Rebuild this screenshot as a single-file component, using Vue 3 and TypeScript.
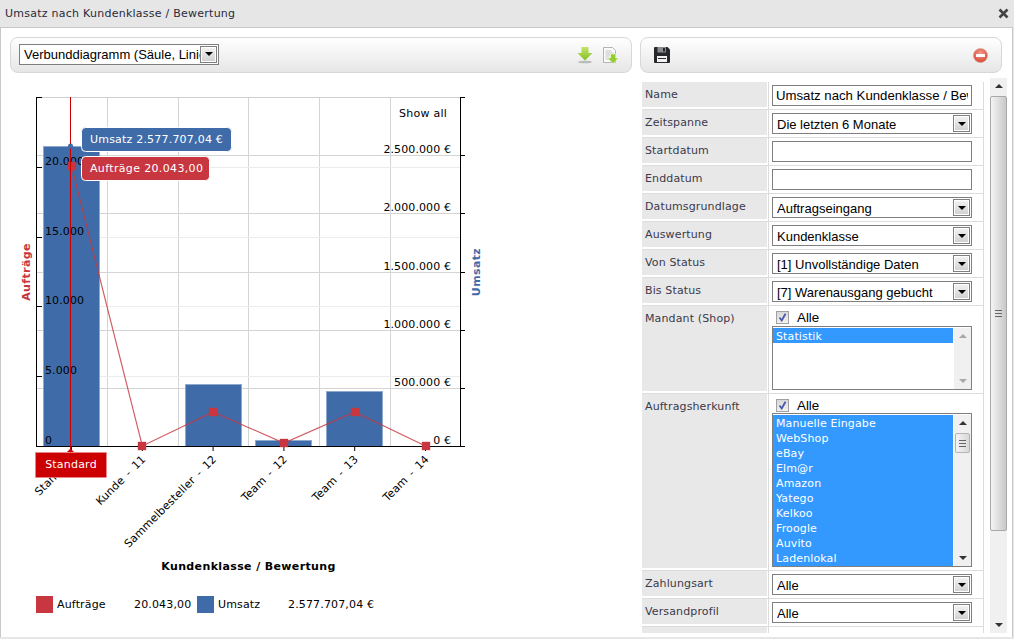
<script setup lang="ts">
import { computed } from "vue";

interface Point { label: string; orders: number; revenue: number }

const points: Point[] = [
    { label: 'Standard', orders: 20043, revenue: 2577707 },
    { label: 'Kunde - 11', orders: 0, revenue: 0 },
    { label: 'Sammelbesteller - 12', orders: 2435, revenue: 533000 },
    { label: 'Team - 12', orders: 215, revenue: 51600 },
    { label: 'Team - 13', orders: 2435, revenue: 473000 },
    { label: 'Team - 14', orders: 0, revenue: 0 },
];

const baseY = 446;
const topY = 97;
const plotH = baseY - topY;
const stepX = 70.8;

const xAt = (i: number) => 71.5 + i * stepX;
const yOrders = (v: number) => baseY - (v / 25000) * plotH;
const yRevenue = (v: number) => baseY - (v / 3000000) * plotH;
const crisp = (y: number) => Math.round(y) + 0.5;

const leftTicks = [0, 5000, 10000, 15000, 20000].map((v) => ({
    y: crisp(yOrders(v)),
    text: v === 0 ? '0' : v.toLocaleString('de-DE'),
}));
const rightTicks = [0, 500000, 1000000, 1500000, 2000000, 2500000].map((v) => ({
    y: crisp(yRevenue(v)),
    text: v.toLocaleString('de-DE') + ' €',
}));
const gridX = [107.5, 178.5, 248.5, 319.5, 390.5];

const linePath = computed(() =>
    points.map((p, i) => `${xAt(i)},${yOrders(p.orders)}`).join(' ')
);

const origins = ['Manuelle Eingabe', 'WebShop', 'eBay', 'Elm@r', 'Amazon', 'Yatego', 'Kelkoo', 'Froogle', 'Auvito', 'Ladenlokal'];

const simpleRows: { label: string; type: string; value: string }[] = [
    { label: 'Name', type: 'text', value: 'Umsatz nach Kundenklasse / Bewertung' },
    { label: 'Zeitspanne', type: 'select', value: 'Die letzten 6 Monate' },
    { label: 'Startdatum', type: 'text', value: '' },
    { label: 'Enddatum', type: 'text', value: '' },
    { label: 'Datumsgrundlage', type: 'select', value: 'Auftragseingang' },
    { label: 'Auswertung', type: 'select', value: 'Kundenklasse' },
    { label: 'Von Status', type: 'select', value: '[1] Unvollständige Daten' },
    { label: 'Bis Status', type: 'select', value: '[7] Warenausgang gebucht' },
];
</script>

<template>
    <div class="window">
        <header class="title">
            <span>Umsatz nach Kundenklasse / Bewertung</span>
            <svg class="close" width="11" height="11" viewBox="0 0 11 11">
                <path d="M1.500 1.500l8 8M9.500 1.500l-8 8" stroke="#444" stroke-width="2.600" />
            </svg>
        </header>

        <div class="body">
            <section class="left">
                <div class="toolbar">
                    <div class="combo combo--chart">
                        <select>
                            <option>Verbunddiagramm (Säule, Linie)</option>
                        </select>
                        <span class="combo--btn"><i></i></span>
                    </div>
                    <div class="toolbar--icons">
                        <svg width="16" height="18" viewBox="0 0 16 18">
                            <defs>
                                <linearGradient id="g1" x1="0" y1="0" x2="0" y2="1">
                                    <stop offset="0" stop-color="#c4e46c" />
                                    <stop offset="1" stop-color="#84c020" />
                                </linearGradient>
                            </defs>
                            <ellipse cx="8" cy="16" rx="7" ry="1.300" fill="#9a9a9a" opacity="0.6" />
                            <path d="M4.500 1h7v6H15.500l-7.500 7.500L0.500 7H4.500z" fill="url(#g1)" />
                        </svg>
                        <svg width="17" height="17" viewBox="0 0 17 17">
                            <path d="M1.500 .5h9l3 3v12h-12z" fill="#fafafa" stroke="#b4b4b4" />
                            <path d="M3.500 4h6M3.500 6h8M3.500 8h5M3.500 10h4M3.500 12h4" stroke="#c4c4c4" />
                            <path d="M8.500 7h5v4H16.500l-5.500 5.500L5.500 11h3z" fill="#94cc2c" stroke="#fff" stroke-width=".5" />
                        </svg>
                    </div>
                </div>

                <svg class="chart" width="490" height="505" viewBox="0 80 490 505">
                    <line v-for="x in gridX" :key="x" :x1="x" :x2="x" :y1="topY" :y2="baseY" stroke="#d4d4d4" />
                    <line x1="36" x2="460" :y1="topY + .5" :y2="topY + .5" stroke="#cfcfcf" />
                    <line v-for="t in leftTicks.slice(1)" :key="t.y" x1="36" x2="460" :y1="t.y" :y2="t.y" stroke="#ececec" />
                    <line v-for="t in rightTicks.slice(1)" :key="t.y" x1="36" x2="460" :y1="t.y" :y2="t.y" stroke="#d4d4d4" />

                    <template v-for="(p, i) in points" :key="p.label">
                        <rect
                            v-if="p.revenue > 0"
                            :x="Math.round(xAt(i) - 28.5) + .5"
                            :y="Math.round(yRevenue(p.revenue)) + .5"
                            width="56"
                            :height="baseY - Math.round(yRevenue(p.revenue))"
                            fill="#3f6ca8"
                            stroke="#8fa9cc"
                            stroke-width="1"
                        />
                    </template>

                    <text v-for="t in leftTicks" :key="t.text" x="45" :y="t.y - 3" class="tick">{{ t.text }}</text>
                    <text v-for="t in rightTicks" :key="t.text" x="451" :y="t.y - 3" text-anchor="end" class="tick">{{ t.text }}</text>
                    <text x="447" y="117" text-anchor="end" class="tick tick--wide">Show all</text>

                    <line x1="36.500" x2="36.500" :y1="topY" :y2="baseY + .5" stroke="#000" />
                    <line x1="460.500" x2="460.500" :y1="topY" :y2="baseY + .5" stroke="#000" />
                    <line x1="36" x2="465" :y1="baseY + .5" :y2="baseY + .5" stroke="#000" />
                    <line x1="36" x2="42" :y1="topY + .5" :y2="topY + .5" stroke="#000" />
                    <line x1="460" x2="465" :y1="topY + .5" :y2="topY + .5" stroke="#000" />
                    <line v-for="t in leftTicks.slice(1)" :key="t.y" x1="36" x2="42" :y1="t.y" :y2="t.y" stroke="#000" />
                    <line v-for="t in rightTicks.slice(1)" :key="t.y" x1="460" x2="465" :y1="t.y" :y2="t.y" stroke="#000" />
                    <line v-for="(p, i) in points" :key="p.label" :x1="xAt(i)" :x2="xAt(i)" :y1="baseY" :y2="baseY + 5" stroke="#000" />

                    <polyline :points="linePath" fill="none" stroke="#c8363f" stroke-width="1.200" opacity=".8" />
                    <rect
                        v-for="(p, i) in points"
                        :key="p.label"
                        :x="Math.round(xAt(i)) - 4"
                        :y="Math.round(yOrders(p.orders)) - 4"
                        width="8"
                        height="8"
                        fill="#c8363f"
                        stroke="#c8363f"
                        stroke-opacity=".35"
                        stroke-width="1"
                    />

                    <text
                        v-for="(p, i) in points"
                        :key="p.label"
                        :transform="`rotate(-45 ${xAt(i) + 4} 460)`"
                        :x="xAt(i) + 4"
                        y="460"
                        text-anchor="end"
                        class="tick tick--cat"
                    >{{ p.label }}</text>

                    <text x="248.500" y="570" text-anchor="middle" class="axis">Kundenklasse / Bewertung</text>
                    <text transform="rotate(-90 30 272)" x="30" y="272" text-anchor="middle" class="axis axis--red">Aufträge</text>
                    <text transform="rotate(-90 480 272)" x="480" y="272" text-anchor="middle" class="axis axis--blue">Umsatz</text>

                    <line x1="70.500" x2="70.500" :y1="topY" y2="453" stroke="#cc0000" />
                    <circle cx="70.500" cy="146" r="2.500" fill="#3f6ca8" />

                    <rect x="81.500" y="127.500" width="150" height="24" rx="4" fill="#3f6ca8" stroke="#fff" />
                    <text x="90" y="143" class="tip">Umsatz 2.577.707,04 €</text>
                    <rect x="81.500" y="156.500" width="128" height="24" rx="4" fill="#c8363f" stroke="#fff" />
                    <text x="90" y="172" class="tip tip--wide">Aufträge 20.043,00</text>

                    <path d="M67 452l3.500-3.500 3.500 3.500z" fill="#cc0000" />
                    <rect x="35.500" y="452.500" width="71" height="25" fill="#cc0000" stroke="#e88" stroke-width=".6" />
                    <text x="71" y="468" text-anchor="middle" class="tip">Standard</text>
                </svg>

                <div class="legend">
                    <i class="legend--swatch legend--red"></i>
                    <span class="legend--name">Aufträge</span>
                    <span class="legend--value">20.043,00</span>
                    <i class="legend--swatch legend--blue"></i>
                    <span class="legend--name legend--name--short">Umsatz</span>
                    <span>2.577.707,04 €</span>
                </div>
            </section>

            <section class="right">
                <div class="toolbar toolbar--right">
                    <svg width="16" height="16" viewBox="0 0 16 16">
                        <path d="M0 1a1 1 0 0 1 1-1h12.500L16 2.500V15a1 1 0 0 1-1 1H1a1 1 0 0 1-1-1z" fill="#26282b" />
                        <rect x="3.500" y="0" width="8.500" height="5.500" fill="#8a8d90" />
                        <rect x="9" y="1" width="2" height="3.500" fill="#26282b" />
                        <rect x="3" y="9" width="10" height="6" fill="#f2f2f2" />
                        <rect x="4" y="11" width="8" height="1" fill="#26282b" />
                    </svg>
                    <svg width="15" height="15" viewBox="0 0 15 15">
                        <defs>
                            <radialGradient id="r1" cx=".5" cy=".35" r=".7">
                                <stop offset="0" stop-color="#f59a8c" />
                                <stop offset="1" stop-color="#d9412f" />
                            </radialGradient>
                        </defs>
                        <circle cx="7.500" cy="7.500" r="7" fill="url(#r1)" stroke="#c9a090" stroke-width=".6" />
                        <rect x="3" y="6" width="9" height="3" rx=".5" fill="#fff" />
                    </svg>
                </div>

                <div class="formWrap">
                    <div class="form">
                        <div v-for="row in simpleRows" :key="row.label" class="row">
                            <div class="row--label">{{ row.label }}</div>
                            <div class="row--field">
                                <input v-if="row.type === 'text'" class="input" type="text" :value="row.value">
                                <div v-else class="combo">
                                    <select><option>{{ row.value }}</option></select>
                                    <span class="combo--btn"><i></i></span>
                                </div>
                            </div>
                        </div>

                        <div class="row">
                            <div class="row--label">Mandant (Shop)</div>
                            <div class="row--field">
                                <label class="check"><span class="check--box">
                                    <svg width="9" height="9" viewBox="0 0 9 9"><path d="M1.500 4.500l2.200 3L7.500.8" fill="none" stroke="#4a58a8" stroke-width="1.800" /></svg>
                                </span>Alle</label>
                                <div class="list list--small">
                                    <div class="list--items">
                                        <div class="list--opt">Statistik</div>
                                    </div>
                                    <div class="list--bar">
                                        <i class="arrow arrow--up arrow--off"></i>
                                        <i class="arrow arrow--down arrow--off"></i>
                                    </div>
                                </div>
                            </div>
                        </div>

                        <div class="row">
                            <div class="row--label">Auftragsherkunft</div>
                            <div class="row--field">
                                <label class="check"><span class="check--box">
                                    <svg width="9" height="9" viewBox="0 0 9 9"><path d="M1.500 4.500l2.200 3L7.500.8" fill="none" stroke="#4a58a8" stroke-width="1.800" /></svg>
                                </span>Alle</label>
                                <div class="list list--big">
                                    <div class="list--items list--items--fill">
                                        <div v-for="o in origins" :key="o" class="list--opt">{{ o }}</div>
                                    </div>
                                    <div class="list--bar">
                                        <i class="arrow arrow--up"></i>
                                        <span class="list--thumb"><b></b></span>
                                        <i class="arrow arrow--down"></i>
                                    </div>
                                </div>
                            </div>
                        </div>

                        <div class="row">
                            <div class="row--label">Zahlungsart</div>
                            <div class="row--field">
                                <div class="combo"><select><option>Alle</option></select><span class="combo--btn"><i></i></span></div>
                            </div>
                        </div>
                        <div class="row">
                            <div class="row--label">Versandprofil</div>
                            <div class="row--field">
                                <div class="combo"><select><option>Alle</option></select><span class="combo--btn"><i></i></span></div>
                            </div>
                        </div>
                        <div class="row">
                            <div class="row--label"></div>
                            <div class="row--field"></div>
                        </div>
                    </div>

                    <div class="pageBar">
                        <i class="arrow arrow--up"></i>
                        <span class="pageBar--thumb"><b></b></span>
                        <i class="arrow arrow--down"></i>
                    </div>
                </div>
            </section>
        </div>
    </div>
</template>

<style scoped>
.window {
    width: 1014px;
    height: 639px;
    background: #e6e6e6;
    font-family: "DejaVu Sans", Verdana, sans-serif;
    font-size: 11px;
    color: #000;
    overflow: hidden;
    box-sizing: border-box;
}

.title {
    height: 27px;
    display: flex;
    align-items: center;
    justify-content: space-between;
    padding: 0 5px;
    color: #2a2a3a;
    letter-spacing: .25px;
    box-sizing: border-box;
}

.body {
    width: 1013px;
    height: 610px;
    display: flex;
    background: #fff;
    border: 1px solid #c8c8c8;
    border-bottom: none;
    box-sizing: border-box;
    overflow: hidden;
}

.left {
    width: 639px;
    flex: none;
    padding: 9px 0 0 9px;
    box-sizing: border-box;
}

.right {
    flex: 1;
    padding: 9px 0 0 0;
    min-width: 0;
}

.toolbar {
    height: 36px;
    width: 622px;
    display: flex;
    align-items: center;
    justify-content: space-between;
    border: 1px solid #d8d8d8;
    border-radius: 8px;
    background: linear-gradient(#ffffff, #e6e6e6);
    padding: 0 11px 0 8px;
    box-sizing: border-box;
}

.toolbar--right {
    width: 362px;
    padding: 0 13px 0 13px;
}

.toolbar--icons {
    display: flex;
    gap: 9px;
    align-items: center;
    margin-right: 1px;
}

.chart {
    display: block;
    margin: 7px 0 0 -10px;
}

.tick {
    font-size: 11px;
    letter-spacing: .1px;
    fill: #000;
}

.tick--wide {
    letter-spacing: .25px;
}

.tick--cat {
    letter-spacing: .15px;
    word-spacing: 2px;
}

.axis {
    font-size: 11px;
    font-weight: bold;
    letter-spacing: .37px;
    fill: #000;
}

.axis--red {
    fill: #c8363f;
}

.axis--blue {
    fill: #3f6ca8;
}

.tip {
    font-size: 11px;
    letter-spacing: .2px;
    fill: #fff;
}

.tip--wide {
    letter-spacing: .35px;
}

.legend {
    display: flex;
    align-items: center;
    margin: 11px 0 0 26px;
    height: 17px;
    letter-spacing: .15px;
}

.legend--swatch {
    width: 17px;
    height: 17px;
    display: block;
    flex: none;
}

.legend--red {
    background: #c8363f;
}

.legend--blue {
    background: #3f6ca8;
}

.legend--name {
    margin-left: 4px;
    width: 77px;
}

.legend--name--short {
    width: 70px;
}

.legend--value {
    width: 63px;
}

.formWrap {
    display: flex;
    height: 555px;
    margin-top: 5px;
    overflow: hidden;
}

.form {
    width: 342px;
    margin: 4px 0 0 2px;
    flex: none;
    letter-spacing: .13px;
}

.row {
    display: grid;
    grid-template-columns: 125px 1fr;
    column-gap: 1px;
    border-bottom: 1px solid #dcdcdc;
    min-height: 27px;
}

.row--label {
    background: #e8e8e8;
    margin-bottom: 2px;
    padding: 6px 0 0 3px;
    color: #3a3a4a;
    line-height: 14px;
}

.row--field {
    border-left: 1px solid #dcdcdc;
    border-right: 1px solid #dcdcdc;
    padding: 3px 10px 3px 3px;
}

.input {
    display: block;
    width: 200px;
    height: 21px;
    border: 1px solid #7f7f7f;
    padding: 1px 3px;
    box-sizing: border-box;
    font-family: "Liberation Sans", Arial, sans-serif;
    font-size: 13.2px;
    color: #000;
    background: #fff;
    outline: none;
}

.combo {
    position: relative;
    width: 200px;
    height: 21px;
}

.combo--chart {
    margin-top: -2px;
}

.combo select {
    display: block;
    width: 100%;
    height: 100%;
    border: 1px solid #7f7f7f;
    border-radius: 0;
    appearance: none;
    background: #fff;
    padding: 1px 3px 0 4px;
    box-sizing: border-box;
    font-family: "Liberation Sans", Arial, sans-serif;
    font-size: 13px;
    color: #000;
}

.combo--btn {
    position: absolute;
    top: 2px;
    right: 2px;
    width: 17px;
    height: 17px;
    box-sizing: border-box;
    border: 1px solid #7f7f7f;
    background: linear-gradient(#f4f4f4, #cfcfcf);
    box-shadow: inset 0 0 0 1px #fff;
    display: flex;
    align-items: center;
    justify-content: center;
}

.combo--btn i {
    width: 0;
    height: 0;
    border: 4px solid transparent;
    border-top: 4px solid #000;
    border-bottom: none;
}

.check {
    display: flex;
    align-items: center;
    height: 15px;
    margin: 1px 0 0 4px;
    font-family: "Liberation Sans", Arial, sans-serif;
    font-size: 13.33px;
    letter-spacing: 0;
}

.check--box {
    width: 11px;
    height: 11px;
    margin-right: 8px;
    border: 1px solid #a0a0a0;
    background: linear-gradient(#d8d8d8, #f2f2f2);
    display: flex;
    align-items: center;
    justify-content: center;
}

.list {
    display: flex;
    width: 200px;
    border: 1px solid #7f7f7f;
    box-sizing: border-box;
    background: #fff;
    padding-top: 1px;
    color: #fff;
}

.list--small {
    margin-top: 1px;
    height: 64px;
}

.list--big {
    height: 154px;
}

.list--items {
    width: 180px;
}

.list--items--fill {
    background: #3399ff;
}

.list--opt {
    height: 15px;
    line-height: 17px;
    padding-left: 3px;
    background: #3399ff;
}

.list--bar {
    width: 17px;
    margin-left: 1px;
    background: #f0f0f0;
    display: flex;
    flex-direction: column;
    align-items: center;
    justify-content: space-between;
    padding: 6px 0;
    box-sizing: border-box;
    position: relative;
}

.list--thumb {
    position: absolute;
    top: 18px;
    left: 1px;
    width: 15px;
    height: 20px;
    box-sizing: border-box;
    border: 1px solid #b4b4b4;
    border-radius: 2px;
    background: linear-gradient(90deg, #f4f4f4, #d8d8d8);
    display: flex;
    align-items: center;
    justify-content: center;
}

.list--thumb b,
.pageBar--thumb b {
    width: 7px;
    height: 7px;
    background: repeating-linear-gradient(#666 0 1px, transparent 1px 3px);
    display: block;
}

.arrow {
    display: block;
    width: 0;
    height: 0;
    border: 4px solid transparent;
}

.arrow--up {
    border-top: none;
    border-bottom: 4px solid #333;
}

.arrow--down {
    border-bottom: none;
    border-top: 4px solid #333;
}

.arrow--off.arrow--up {
    border-bottom-color: #a8a8a8;
}

.arrow--off.arrow--down {
    border-top-color: #a8a8a8;
}

.pageBar {
    width: 17px;
    height: 555px;
    margin-left: 6px;
    flex: none;
    background: #f0f0f0;
    position: relative;
    display: flex;
    flex-direction: column;
    align-items: center;
    justify-content: space-between;
    padding: 6px 0;
    box-sizing: border-box;
}

.pageBar--thumb {
    position: absolute;
    top: 18px;
    left: 0;
    width: 17px;
    height: 435px;
    box-sizing: border-box;
    border: 1px solid #a8a8a8;
    border-radius: 2px;
    background: linear-gradient(90deg, #f4f4f4, #c8c8c8);
    display: flex;
    align-items: center;
    justify-content: center;
}
</style>

<style>
html, body {
    margin: 0;
    padding: 0;
    background: #e6e6e6;
}
</style>
